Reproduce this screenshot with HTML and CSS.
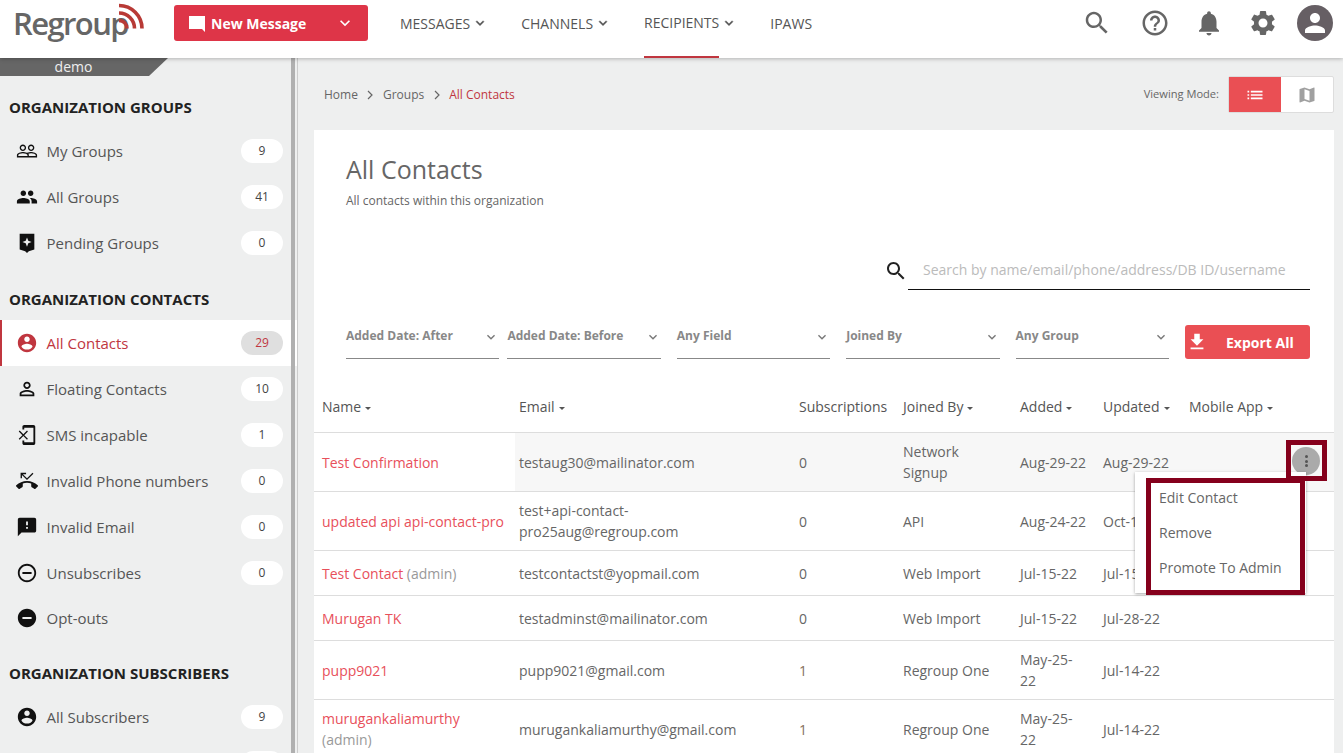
FILE: index.html
```html
<!DOCTYPE html>
<html lang="en">
<head>
  <meta charset="UTF-8">
  <title>All Contacts</title>
  <link rel="stylesheet" href="styles.css">
</head>
<body>
  <svg class="sprite" width="0" height="0">
    <symbol id="i-search" viewBox="0 0 24 24"><path d="M15.5 14h-.79l-.28-.27C15.41 12.59 16 11.11 16 9.5 16 5.91 13.09 3 9.5 3S3 5.91 3 9.5 5.91 16 9.5 16c1.61 0 3.09-.59 4.23-1.57l.27.28v.79l5 4.99L20.49 19l-4.99-5zm-6 0C7.01 14 5 11.99 5 9.5S7.01 5 9.5 5 14 7.01 14 9.5 11.99 14 9.5 14z"/></symbol>
    <symbol id="i-help" viewBox="0 0 24 24"><path d="M11 18h2v-2h-2v2zm1-16C6.48 2 2 6.48 2 12s4.48 10 10 10 10-4.48 10-10S17.52 2 12 2zm0 18c-4.41 0-8-3.59-8-8s3.59-8 8-8 8 3.59 8 8-3.59 8-8 8zm0-14c-2.21 0-4 1.79-4 4h2c0-1.1.9-2 2-2s2 .9 2 2c0 2-3 1.75-3 5h2c0-2.25 3-2.5 3-5 0-2.21-1.79-4-4-4z"/></symbol>
    <symbol id="i-bell" viewBox="0 0 24 24"><path d="M12 22c1.1 0 2-.9 2-2h-4c0 1.1.89 2 2 2zm6-6v-5c0-3.07-1.64-5.64-4.5-6.32V4c0-.83-.67-1.5-1.5-1.5s-1.5.67-1.5 1.5v.68C7.63 5.36 6 7.92 6 11v5l-2 2v1h16v-1l-2-2z"/></symbol>
    <symbol id="i-gear" viewBox="0 0 24 24"><path d="M19.14 12.94c.04-.3.06-.61.06-.94 0-.32-.02-.64-.07-.94l2.03-1.58c.18-.14.23-.41.12-.61l-1.92-3.32c-.12-.22-.37-.29-.59-.22l-2.39.96c-.5-.38-1.03-.7-1.62-.94l-.36-2.54c-.04-.24-.24-.41-.48-.41h-3.84c-.24 0-.43.17-.47.41l-.36 2.54c-.59.24-1.13.57-1.62.94l-2.39-.96c-.22-.08-.47 0-.59.22L2.74 8.87c-.12.21-.08.47.12.61l2.03 1.58c-.05.3-.09.63-.09.94s.02.64.07.94l-2.03 1.58c-.18.14-.23.41-.12.61l1.92 3.32c.12.22.37.29.59.22l2.39-.96c.5.38 1.03.7 1.62.94l.36 2.54c.05.24.24.41.48.41h3.84c.24 0 .44-.17.47-.41l.36-2.54c.59-.24 1.13-.56 1.62-.94l2.39.96c.22.08.47 0 .59-.22l1.92-3.32c.12-.22.07-.47-.12-.61l-2.01-1.58zM12 15.6c-1.98 0-3.6-1.62-3.6-3.6s1.62-3.6 3.6-3.6 3.6 1.62 3.6 3.6-1.62 3.6-3.6 3.6z"/></symbol>
    <symbol id="i-person" viewBox="0 0 24 24"><path d="M12 12c2.21 0 4-1.79 4-4s-1.79-4-4-4-4 1.79-4 4 1.79 4 4 4zm0 2c-2.67 0-8 1.34-8 4v2h16v-2c0-2.66-5.33-4-8-4z"/></symbol>
    <symbol id="i-account" viewBox="0 0 24 24"><path d="M12 2C6.48 2 2 6.48 2 12s4.48 10 10 10 10-4.48 10-10S17.52 2 12 2zm0 3c1.66 0 3 1.34 3 3s-1.34 3-3 3-3-1.34-3-3 1.34-3 3-3zm0 14.2c-2.5 0-4.71-1.28-6-3.22.03-1.99 4-3.08 6-3.08 1.99 0 5.97 1.09 6 3.08-1.29 1.94-3.5 3.22-6 3.22z"/></symbol>
    <symbol id="i-people" viewBox="0 0 24 24"><path d="M16 11c1.66 0 2.99-1.34 2.99-3S17.66 5 16 5c-1.66 0-3 1.34-3 3s1.34 3 3 3zm-8 0c1.66 0 2.99-1.34 2.99-3S9.66 5 8 5C6.34 5 5 6.34 5 8s1.34 3 3 3zm0 2c-2.33 0-7 1.17-7 3.5V19h14v-2.5c0-2.33-4.67-3.5-7-3.5zm8 0c-.29 0-.62.02-.97.05 1.16.84 1.97 1.97 1.97 3.45V19h6v-2.5c0-2.33-4.67-3.5-7-3.5z"/></symbol>
    <symbol id="i-people-line" viewBox="0 0 24 24"><path d="M16.5 13c-1.2 0-3.07.34-4.5 1-1.43-.67-3.3-1-4.5-1C5.33 13 1 14.08 1 16.25V19h22v-2.75c0-2.17-4.33-3.25-6.5-3.25zm-4 4.5h-10v-1.25c0-.54 2.56-1.75 5-1.75s5 1.21 5 1.75v1.25zm9 0H14v-1.25c0-.46-.2-.86-.52-1.22.88-.3 1.96-.53 3.02-.53 2.44 0 5 1.21 5 1.75v1.25zM7.5 12c1.93 0 3.5-1.57 3.5-3.5S9.43 5 7.5 5 4 6.57 4 8.5 5.57 12 7.5 12zm0-5.5c1.1 0 2 .9 2 2s-.9 2-2 2-2-.9-2-2 .9-2 2-2zm9 5.5c1.93 0 3.5-1.57 3.5-3.5S18.43 5 16.5 5 13 6.57 13 8.5s1.57 3.5 3.5 3.5zm0-5.5c1.1 0 2 .9 2 2s-.9 2-2 2-2-.9-2-2 .9-2 2-2z"/></symbol>
    <symbol id="i-pending" viewBox="0 0 24 24"><path fill-rule="evenodd" d="M4 2h16v17l-6 2-2 2-2-2-6-2zM12 6l-1.4 3.6L7 11l3.6 1.4L12 16l1.4-3.6L17 11l-3.6-1.4z"/></symbol>
    <symbol id="i-person-line" viewBox="0 0 24 24"><path d="M12 5.9c1.16 0 2.1.94 2.1 2.1s-.94 2.1-2.1 2.1S9.9 9.16 9.9 8s.94-2.1 2.1-2.1m0 9c2.97 0 6.1 1.46 6.1 2.1v1.1H5.9V17c0-.64 3.13-2.1 6.1-2.1M12 4C9.79 4 8 5.79 8 8s1.79 4 4 4 4-1.79 4-4-1.79-4-4-4zm0 9c-2.67 0-8 1.34-8 4v3h16v-3c0-2.66-5.33-4-8-4z"/></symbol>
    <symbol id="i-sms-off" viewBox="0 0 24 24"><path d="M13 8.2l-1-1-4 4-4-4-1 1 4 4-4 4 1 1 4-4 4 4 1-1-4-4 4-4zM19 1H9c-1.1 0-2 .9-2 2v3h2V4h10v16H9v-2H7v3c0 1.1.9 2 2 2h10c1.1 0 2-.9 2-2V3c0-1.1-.9-2-2-2z"/></symbol>
    <symbol id="i-phone-missed" viewBox="0 0 24 24"><path d="M6.5 5.5L12 11l7-7-1-1-6 6-4.5-4.5H11V3H5v6h1.5V5.5zm17.21 11.17C20.66 13.78 16.54 12 12 12 7.46 12 3.34 13.78.29 16.67c-.18.18-.29.43-.29.71s.11.53.29.71l2.48 2.48c.18.18.43.29.71.29.27 0 .52-.11.7-.28.79-.74 1.69-1.36 2.66-1.85.33-.16.56-.5.56-.9v-3.1c1.45-.48 3-.73 4.6-.73 1.6 0 3.15.25 4.6.72v3.1c0 .39.23.74.56.9.98.49 1.87 1.12 2.67 1.85.18.18.43.28.7.28.28 0 .53-.11.71-.29l2.48-2.48c.18-.18.29-.43.29-.71s-.12-.52-.3-.7z"/></symbol>
    <symbol id="i-sms-failed" viewBox="0 0 24 24"><path d="M20 2H4c-1.1 0-1.99.9-1.99 2L2 22l4-4h14c1.1 0 2-.9 2-2V4c0-1.1-.9-2-2-2zm-7 12h-2v-2h2v2zm0-4h-2V6h2v4z"/></symbol>
    <symbol id="i-minus-line" viewBox="0 0 24 24"><path d="M7 11v2h10v-2H7zm5-9C6.48 2 2 6.48 2 12s4.48 10 10 10 10-4.48 10-10S17.52 2 12 2zm0 18c-4.41 0-8-3.59-8-8s3.59-8 8-8 8 3.59 8 8-3.59 8-8 8z"/></symbol>
    <symbol id="i-minus" viewBox="0 0 24 24"><path d="M12 2C6.48 2 2 6.48 2 12s4.48 10 10 10 10-4.48 10-10S17.52 2 12 2zm5 11H7v-2h10v2z"/></symbol>
    <symbol id="i-chevron" viewBox="0 0 24 24"><path d="M7.4 8.6L12 13.2l4.6-4.6L18 10l-6 6-6-6z"/></symbol>
  </svg>

  <header class="topbar">
    <a class="logo">
      <span class="logo-text">Regroup</span>
      <svg class="logo-waves" width="34" height="34" viewBox="0 0 34 34" fill="none" stroke="#b83a36" stroke-width="3.6">
        <path d="M7 3.5a23 23 0 0 1 23 23"/>
        <path d="M7 11a15.500 15.500 0 0 1 15.500 15.500"/>
        <path d="M7 18.500a8 8 0 0 1 8 8"/>
      </svg>
    </a>
    <button class="new-message">
      <svg class="bubble" width="18" height="18" viewBox="0 0 18 18"><path d="M1 1h16v16l-3-3H1z"/></svg>
      <span>New Message</span>
      <svg class="caret" width="20" height="20"><use href="#i-chevron"/></svg>
    </button>
    <nav class="nav">
      <a class="nav-link"><span>MESSAGES</span><svg width="16" height="16"><use href="#i-chevron"/></svg></a>
      <a class="nav-link"><span>CHANNELS</span><svg width="16" height="16"><use href="#i-chevron"/></svg></a>
      <a class="nav-link active"><span>RECIPIENTS</span><svg width="16" height="16"><use href="#i-chevron"/></svg></a>
      <a class="nav-link"><span>IPAWS</span></a>
    </nav>
    <div class="tools">
      <svg class="tool-search" width="30" height="30"><use href="#i-search"/></svg>
      <svg width="30" height="30"><use href="#i-help"/></svg>
      <svg width="30" height="30"><use href="#i-bell"/></svg>
      <svg width="30" height="30"><use href="#i-gear"/></svg>
      <span class="avatar"><svg width="30" height="30"><use href="#i-person"/></svg></span>
    </div>
  </header>

  <div class="layout">
    <aside class="sidebar">
      <div class="org-tab">demo</div>

      <section class="side-section">
        <h3>ORGANIZATION GROUPS</h3>
        <a class="side-item"><svg width="22" height="22"><use href="#i-people-line"/></svg><span>My Groups</span><b class="pill">9</b></a>
        <a class="side-item"><svg width="22" height="22"><use href="#i-people"/></svg><span>All Groups</span><b class="pill">41</b></a>
        <a class="side-item"><svg width="22" height="22"><use href="#i-pending"/></svg><span>Pending Groups</span><b class="pill">0</b></a>
      </section>

      <section class="side-section">
        <h3>ORGANIZATION CONTACTS</h3>
        <a class="side-item active"><svg width="22" height="22"><use href="#i-account"/></svg><span>All Contacts</span><b class="pill">29</b></a>
        <a class="side-item"><svg width="22" height="22"><use href="#i-person-line"/></svg><span>Floating Contacts</span><b class="pill">10</b></a>
        <a class="side-item"><svg width="22" height="22"><use href="#i-sms-off"/></svg><span>SMS incapable</span><b class="pill">1</b></a>
        <a class="side-item"><svg width="22" height="22"><use href="#i-phone-missed"/></svg><span>Invalid Phone numbers</span><b class="pill">0</b></a>
        <a class="side-item"><svg width="22" height="22"><use href="#i-sms-failed"/></svg><span>Invalid Email</span><b class="pill">0</b></a>
        <a class="side-item"><svg width="22" height="22"><use href="#i-minus-line"/></svg><span>Unsubscribes</span><b class="pill">0</b></a>
        <a class="side-item short"><svg width="22" height="22"><use href="#i-minus"/></svg><span>Opt-outs</span></a>
      </section>

      <section class="side-section">
        <h3>ORGANIZATION SUBSCRIBERS</h3>
        <a class="side-item"><svg width="22" height="22"><use href="#i-account"/></svg><span>All Subscribers</span><b class="pill">9</b></a>
        <a class="side-item"><span></span><b class="pill"></b></a>
      </section>

      <div class="side-scroll"></div>
    </aside>

    <main class="main">
      <div class="crumb-row">
        <div class="crumbs">
          <a>Home</a><svg width="14" height="14" viewBox="0 0 14 14"><path d="M5 3l4 4-4 4"/></svg>
          <a>Groups</a><svg width="14" height="14" viewBox="0 0 14 14"><path d="M5 3l4 4-4 4"/></svg>
          <a class="current">All Contacts</a>
        </div>
        <div class="view-mode">
          <span>Viewing Mode:</span>
          <div class="toggle">
            <button class="on"><svg width="20" height="20" viewBox="0 0 24 24"><path d="M3 13h2v-2H3v2zm0 4h2v-2H3v2zm0-8h2V7H3v2zm4 4h14v-2H7v2zm0 4h14v-2H7v2zM7 7v2h14V7H7z"/></svg></button>
            <button><svg width="20" height="20" viewBox="0 0 24 24"><path d="M20.500 3l-.16.03L15 5.100 9 3 3.360 4.900c-.21.07-.36.25-.36.48V20.500c0 .28.22.5.5.5l.16-.03L9 18.900l6 2.100 5.640-1.900c.21-.07.36-.25.36-.48V3.500c0-.28-.22-.5-.5-.5zM15 19l-6-2.110V5l6 2.110V19z"/></svg></button>
          </div>
        </div>
      </div>

      <div class="card">
        <div class="card-head">
          <h1>All Contacts</h1>
          <p>All contacts within this organization</p>
        </div>

        <div class="search-row">
          <svg width="24" height="24"><use href="#i-search"/></svg>
          <div class="search-box">Search by name/email/phone/address/DB ID/username</div>
        </div>

        <div class="filters">
          <div class="filter narrow-gap">Added Date: After<svg width="16" height="16"><use href="#i-chevron"/></svg></div>
          <div class="filter">Added Date: Before<svg width="16" height="16"><use href="#i-chevron"/></svg></div>
          <div class="filter">Any Field<svg width="16" height="16"><use href="#i-chevron"/></svg></div>
          <div class="filter">Joined By<svg width="16" height="16"><use href="#i-chevron"/></svg></div>
          <div class="filter">Any Group<svg width="16" height="16"><use href="#i-chevron"/></svg></div>
          <button class="export"><svg width="22" height="22" viewBox="0 0 24 24"><path d="M19 9h-4V3H9v6H5l7 7 7-7zM5 18v2h14v-2H5z"/></svg><span>Export All</span></button>
        </div>

        <table class="contacts">
          <colgroup>
            <col class="c-name"><col class="c-email"><col class="c-subs"><col class="c-joined"><col class="c-added"><col class="c-updated"><col class="c-app">
          </colgroup>
          <thead>
            <tr>
              <th class="sort">Name</th>
              <th class="sort">Email</th>
              <th>Subscriptions</th>
              <th class="sort">Joined By</th>
              <th class="sort">Added</th>
              <th class="sort">Updated</th>
              <th class="sort">Mobile App</th>
            </tr>
          </thead>
          <tbody>
            <tr class="hover">
              <td class="name">Test Confirmation</td>
              <td class="email">testaug30@mailinator.com</td>
              <td>0</td>
              <td>Network<br>Signup</td>
              <td>Aug-29-22</td>
              <td>Aug-29-22</td>
              <td></td>
            </tr>
            <tr>
              <td class="name">updated api api-contact-pro</td>
              <td class="email">test+api-contact-<br>pro25aug@regroup.com</td>
              <td>0</td>
              <td>API</td>
              <td>Aug-24-22</td>
              <td>Oct-13-22</td>
              <td></td>
            </tr>
            <tr>
              <td class="name">Test Contact <em>(admin)</em></td>
              <td class="email">testcontactst@yopmail.com</td>
              <td>0</td>
              <td>Web Import</td>
              <td>Jul-15-22</td>
              <td>Jul-15-22</td>
              <td></td>
            </tr>
            <tr>
              <td class="name">Murugan TK</td>
              <td class="email">testadminst@mailinator.com</td>
              <td>0</td>
              <td>Web Import</td>
              <td>Jul-15-22</td>
              <td>Jul-28-22</td>
              <td></td>
            </tr>
            <tr>
              <td class="name">pupp9021</td>
              <td class="email">pupp9021@gmail.com</td>
              <td class="count">1</td>
              <td>Regroup One</td>
              <td>May-25-<br>22</td>
              <td>Jul-14-22</td>
              <td></td>
            </tr>
            <tr>
              <td class="name">murugankaliamurthy<br><em>(admin)</em></td>
              <td class="email">murugankaliamurthy@gmail.com</td>
              <td class="count">1</td>
              <td>Regroup One</td>
              <td>May-25-<br>22</td>
              <td>Jul-14-22</td>
              <td></td>
            </tr>
          </tbody>
        </table>

        <button class="row-menu-btn"><i></i><i></i><i></i></button>
        <ul class="row-menu">
          <li>Edit Contact</li>
          <li>Remove</li>
          <li>Promote To Admin</li>
        </ul>
        <div class="callout callout-btn"></div>
        <div class="callout callout-menu"></div>
      </div>
    </main>
  </div>
</body>
</html>
```

FILE: styles.css
```css
* {
  box-sizing: border-box;
}

html, body {
  height: 753px;
  margin: 0;
  overflow: hidden;
}

body {
  font-family: "Open Sans", sans-serif;
  font-size: 14px;
  color: #666;
  background-color: #eeefef;
}

.sprite {
  position: absolute;
}

button {
  font-family: inherit;
  border: none;
  cursor: pointer;
}

/* top bar */
.topbar {
  position: relative;
  z-index: 2;
  display: flex;
  align-items: flex-start;
  height: 58px;
  padding-left: 13px;
  background-color: #fff;
  box-shadow: 0 1px 4px rgba(0, 0, 0, 0.25);
}

.logo {
  position: relative;
  width: 161px;
  height: 58px;
}

.logo-text {
  display: block;
  font-family: "Open Sans", sans-serif;
  font-size: 31px;
  font-weight: 600;
  line-height: 46px;
  letter-spacing: -1.6px;
  color: #666;
}

.logo-waves {
  position: absolute;
  left: 99px;
  top: 2px;
}

.new-message {
  display: flex;
  align-items: center;
  width: 194px;
  height: 36px;
  margin-top: 5px;
  padding: 0 13px;
  border-radius: 3px;
  background-color: #de3548;
  color: #fff;
  font-size: 14px;
  font-weight: 700;
}

.new-message .bubble {
  fill: #fff;
  margin: 2px 5px 0 1px;
}

.new-message .caret {
  fill: #fff;
  margin-left: auto;
  margin-right: 0;
}

.nav {
  display: flex;
  height: 58px;
  margin-left: 32px;
}

.nav-link {
  display: flex;
  margin-right: 33px;
  color: #555;
  font-size: 14px;
}

.nav-link span {
  display: flex;
  align-items: center;
  padding-bottom: 12px;
}

.nav-link svg {
  margin: 15px 0 0 2px;
  fill: #555;
  stroke: #555;
  stroke-width: 0.6;
}

.nav-link.active span {
  border-bottom: 2px solid #c0363f;
}

.tools {
  display: flex;
  align-items: center;
  height: 46px;
  margin-left: auto;
  margin-right: 10px;
  gap: 24px;
}

.tools svg {
  display: block;
  fill: #666;
}

.tools .tool-search {
  margin-right: 4px;
}

.avatar {
  display: flex;
  align-items: center;
  justify-content: center;
  width: 36px;
  height: 36px;
  margin-left: -5px;
  border-radius: 50%;
  background-color: #665f64;
}

.tools .avatar svg {
  fill: #fff;
}

/* sidebar */
.layout {
  display: flex;
  height: 695px;
}

.sidebar {
  position: relative;
  width: 297px;
  flex: none;
  height: 695px;
  overflow: hidden;
}

.side-scroll {
  position: absolute;
  top: 0;
  left: 291px;
  width: 4px;
  height: 100%;
  background-color: #b0b0b0;
}

.org-tab {
  width: 168px;
  height: 18px;
  background-color: #666;
  color: #eee;
  font-size: 14px;
  line-height: 18px;
  text-align: center;
  padding-right: 21px;
  clip-path: polygon(0 0, 100% 0, 149px 100%, 0 100%);
}

.side-section {
  padding-top: 22px;
}

.side-section:first-of-type {
  padding-top: 20px;
}

.side-section h3 {
  margin: 0 0 10px;
  padding-left: 9px;
  font-size: 15px;
  font-weight: 700;
  line-height: 22px;
  color: #222;
}

.side-item {
  display: flex;
  align-items: center;
  height: 46px;
  padding: 0 14px 0 16px;
  color: #555;
  font-size: 15px;
}

.side-item.short {
  height: 44px;
}

.side-item svg {
  flex: none;
  margin-right: 8.500px;
  fill: #111;
}

.side-item.active {
  background-color: #fff;
  border-left: 2px solid #c0363f;
  padding-left: 14px;
  color: #c0363f;
}

.side-item.active svg {
  fill: #c0363f;
}

.pill {
  width: 42px;
  height: 24px;
  margin-left: auto;
  border-radius: 12px;
  background-color: #fff;
  color: #444;
  font-size: 12px;
  font-weight: 400;
  line-height: 23px;
  text-align: center;
}

.side-item.active .pill {
  background-color: #dfdfdf;
  color: #c0363f;
}

/* main area */
.main {
  flex: 1;
  min-width: 0;
  padding: 0 9px 0 16px;
  border-left: 1px solid #ccc;
}

.crumb-row {
  display: flex;
  align-items: center;
  justify-content: space-between;
  height: 72px;
  padding: 1px 0 0 10px;
}

.crumbs {
  display: flex;
  align-items: center;
  font-size: 12px;
  color: #666;
}

.crumbs svg {
  margin: 0 5.500px;
  fill: none;
  stroke: #666;
  stroke-width: 1.2;
}

.crumbs .current {
  color: #c0363f;
}

.view-mode {
  display: flex;
  align-items: center;
  font-size: 11.100px;
  color: #666;
}

.view-mode span {
  margin-top: -2px;
}

.toggle {
  display: flex;
  width: 106px;
  height: 37px;
  margin-left: 9px;
  border: 1px solid #ddd;
  border-radius: 2px;
  background-color: #fff;
}

.toggle button {
  flex: 1;
  display: flex;
  align-items: center;
  justify-content: center;
  background: none;
  padding: 0;
}

.toggle svg {
  fill: #a0a0a0;
}

.toggle .on {
  background-color: #ea4f54;
}

.toggle .on svg {
  fill: #fff;
}

.card {
  position: relative;
  height: 640px;
  background-color: #fff;
}

.card-head {
  padding: 23px 0 0 32px;
}

.card-head h1 {
  margin: 0;
  font-size: 25px;
  font-weight: 400;
  line-height: 32px;
  color: #666;
}

.card-head p {
  margin: 7px 0 0;
  font-size: 12px;
  line-height: 18px;
  color: #666;
}

.search-row {
  display: flex;
  align-items: center;
  justify-content: flex-end;
  margin: 42px 24px 0 0;
}

.search-row svg {
  fill: #222;
  margin-right: 0;
}

.search-box {
  width: 402px;
  height: 38px;
  padding-left: 15px;
  border-bottom: 1px solid #111;
  font-size: 14px;
  line-height: 36px;
  color: #bbb;
}

.filters {
  display: flex;
  margin: 35px 24px 0 32px;
}

.filter {
  display: flex;
  justify-content: space-between;
  width: 153.400px;
  height: 34px;
  margin-right: 16px;
  padding-top: 4px;
  border-bottom: 1px solid #888;
  font-size: 12px;
  font-weight: 700;
  line-height: 14px;
  color: #888;
}

.filter.narrow-gap {
  margin-right: 8px;
}

.filter svg {
  fill: #777;
  margin-right: 0;
}

.export {
  display: flex;
  align-items: center;
  width: 125px;
  height: 34px;
  padding: 0 0 0 1.500px;
  border-radius: 3px;
  background-color: #ea4f54;
  color: #fff;
  font-size: 14px;
  font-weight: 700;
}

.export svg {
  fill: #fff;
}

.export span {
  margin-left: 17.500px;
}

/* contacts table */
.contacts {
  width: 1020px;
  margin-top: 23px;
  border-spacing: 0;
  table-layout: fixed;
}

.c-name { width: 201px; }
.c-email { width: 276px; }
.c-subs { width: 104px; }
.c-joined { width: 117px; }
.c-added { width: 83px; }
.c-updated { width: 86px; }
.c-app { width: 153px; }

.contacts th {
  height: 51px;
  padding: 0 8px 2px;
  border-bottom: 1px solid #ddd;
  font-weight: 400;
  font-size: 14px;
  text-align: left;
  color: #555;
  white-space: nowrap;
}

.contacts th:nth-child(2) {
  padding-left: 4px;
}

.contacts .sort::after {
  content: "";
  display: inline-block;
  margin-left: 4px;
  vertical-align: 2px;
  border-top: 3px solid #555;
  border-left: 3px solid transparent;
  border-right: 3px solid transparent;
}

.contacts td {
  height: 45px;
  padding: 8px;
  border-bottom: 1px solid #ddd;
  line-height: 21px;
  color: #666;
}

.contacts .name {
  padding-right: 0;
  color: #e8505b;
}

.contacts .email {
  padding-left: 4px;
}

.contacts .name em {
  font-style: normal;
  color: #999;
}

.contacts .count {
  color: #86705c;
}

.contacts .hover td {
  background-color: #f7f7f7;
}

.contacts .hover td.name {
  background-color: #fff;
}

/* row actions, these sit on top of the table */
.row-menu-btn {
  position: absolute;
  top: 317px;
  right: 14px;
  width: 28px;
  height: 28px;
  padding: 0;
  border-radius: 50%;
  background-color: #aaa;
  display: flex;
  flex-direction: column;
  align-items: center;
  justify-content: center;
  gap: 1.500px;
}

.row-menu-btn i {
  width: 3px;
  height: 3px;
  border-radius: 50%;
  background-color: #555;
}

.row-menu {
  position: absolute;
  top: 342px;
  right: 28px;
  width: 171px;
  height: 121px;
  margin: 0;
  padding: 8px 0 0 24px;
  list-style: none;
  background-color: #fff;
  box-shadow: 0 1px 3px rgba(0, 0, 0, 0.35);
}

.row-menu li {
  height: 35px;
  line-height: 35px;
  color: #666;
}

.callout {
  position: absolute;
  border: 5px solid #85001c;
}

.callout-btn {
  left: 972px;
  top: 310px;
  width: 41px;
  height: 41px;
}

.callout-menu {
  left: 832px;
  top: 348px;
  width: 159px;
  height: 117px;
}
```
